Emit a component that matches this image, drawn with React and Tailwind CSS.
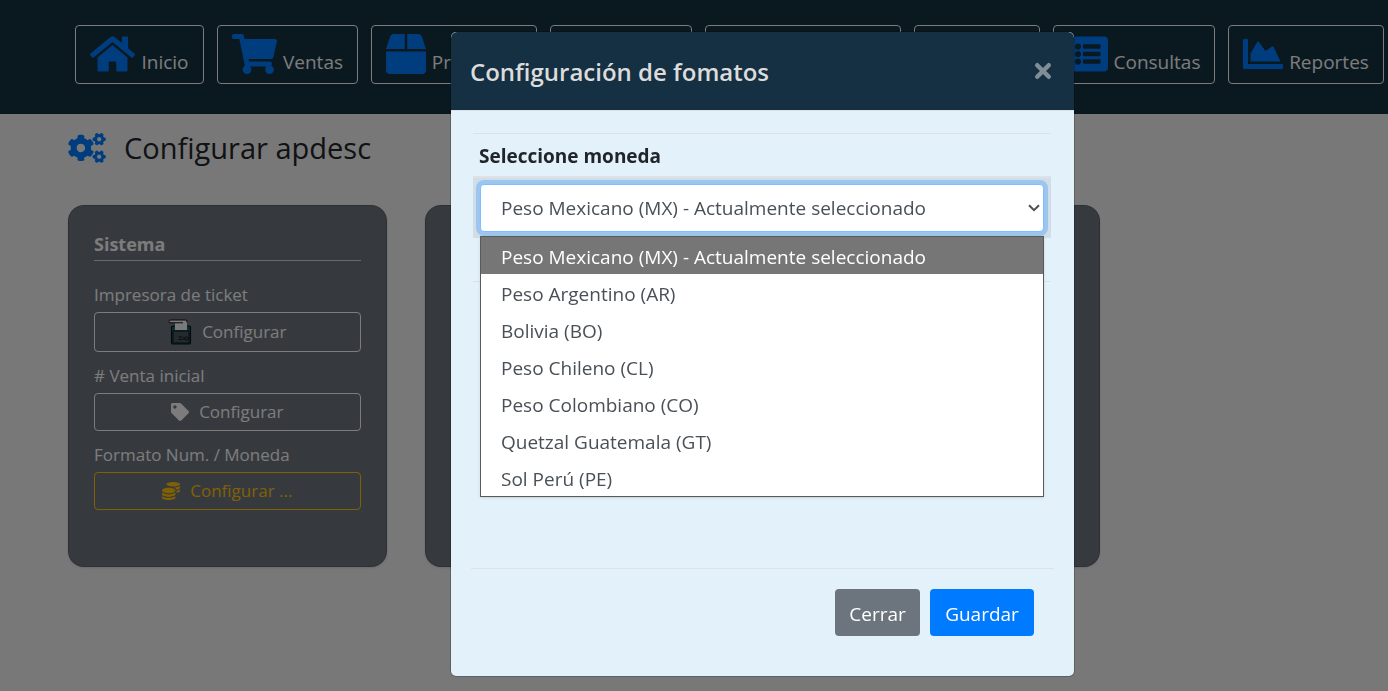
import { useState } from 'react';
import {
  FaHome,
  FaShoppingCart,
  FaBox,
  FaUsers,
  FaTruck,
  FaCashRegister,
  FaListAlt,
  FaChartArea,
  FaCogs,
  FaTag,
  FaCoins,
} from 'react-icons/fa';

const menu = [
  { label: 'Inicio', icon: FaHome, width: 'w-[129px]', iconWidth: 'w-[45px]' },
  { label: 'Ventas', icon: FaShoppingCart, width: 'w-[141px]', iconWidth: 'w-[45px]' },
  { label: 'Productos', icon: FaBox, width: 'w-[166px]', iconWidth: 'w-[40px]' },
  { title: 'Clientes', icon: FaUsers, width: 'w-[142px]', iconWidth: 'w-[50px]' },
  { title: 'Proveedores', icon: FaTruck, width: 'w-[196px]', iconWidth: 'w-[50px]' },
  { title: 'Caja', icon: FaCashRegister, width: 'w-[126px]', iconWidth: 'w-[40px]' },
  { label: 'Consultas', icon: FaListAlt, width: 'w-[162px]', iconWidth: 'w-[40px]' },
  { label: 'Reportes', icon: FaChartArea, width: 'w-[156px]', iconWidth: 'w-[40px]' },
];

const monedas = [
  { id: 'MX', nombre: 'Peso Mexicano (MX) - Actualmente seleccionado' },
  { id: 'AR', nombre: 'Peso Argentino (AR)' },
  { id: 'BO', nombre: 'Bolivia (BO)' },
  { id: 'CL', nombre: 'Peso Chileno (CL)' },
  { id: 'CO', nombre: 'Peso Colombiano (CO)' },
  { id: 'GT', nombre: 'Quetzal Guatemala (GT)' },
  { id: 'PE', nombre: 'Sol Perú (PE)' },
];

function PrinterIcon() {
  return (
    <svg width="24" height="26" viewBox="0 0 24 26" aria-hidden="true">
      <rect x="3.5" y="7" width="19" height="18" rx="1" fill="#14606c" stroke="#0b1418" strokeWidth="1.2" />
      <path d="M5 12H21V24H5Z" fill="#4a545c" stroke="#0b1418" strokeWidth="1" />
      <path d="M7 11V3.8H1.5Q0.2 1 3 1H17.5Q19.5 1 19 3.5V11Z" fill="#f4f4f4" />
      <path d="M15 3.8H1.5Q0.2 1 3 1H17.5Q19.5 1 19 3.5" fill="none" stroke="#111" strokeWidth="1" />
      <path d="M10.5 18h4M10.5 20.5h4M16 18v3" stroke="#10171b" strokeWidth="1.2" />
      <circle cx="18.5" cy="19.5" r="1.6" fill="none" stroke="#10171b" />
    </svg>
  );
}

function Navbar() {
  return (
    <header className="bg-[#143040] h-[114px] pl-[75px] pt-[25px]">
      <nav className="flex gap-[13px]">
        {menu.map(({ label, title, icon: Icon, width, iconWidth }) => (
          <a
            key={label || title}
            href="#"
            aria-label={title}
            className={`${width} h-[59px] shrink-0 flex items-end justify-center gap-1.5 pb-[7px] border border-[#f8f9fa] rounded text-[19px] leading-7 text-[#f8f9fa]`}
          >
            <Icon className={`h-[40px] ${iconWidth} mb-0.5 shrink-0 text-[#007bff]`} />
            {label}
          </a>
        ))}
      </nav>
    </header>
  );
}

function SettingsCard({ children }) {
  return (
    <section className="h-[362px] px-[25px] pt-[25px] bg-[#6c757d] border border-black/15 rounded-2xl shadow text-[#f8f9fa]">
      {children}
    </section>
  );
}

function Setting({ id, label, children, className }) {
  return (
    <div className="mb-3">
      <p id={id} className="mb-[5px] text-[17px] leading-6">{label}</p>
      <button
        type="button"
        aria-describedby={id}
        className={`w-full flex items-center justify-center gap-2.5 border rounded text-[17px] ${className}`}
      >
        {children}
      </button>
    </div>
  );
}

function FormatModal() {
  const [moneda, setMoneda] = useState('MX');

  return (
    <div className="fixed inset-0 flex justify-center items-start pt-[31px] pl-[137px] bg-black/50 overflow-hidden">
      <div
        role="dialog"
        aria-labelledby="modal-title"
        className="w-[625px] bg-[#e3f1fa] bg-clip-padding border border-black/20 rounded-md pb-10"
      >
        <div className="h-[79px] flex items-center justify-between px-[19px] pt-0.5 bg-[#143042] border-b border-[#dee2e6] rounded-t-md">
          <h5 id="modal-title" className="text-[24px] font-semibold text-[#dcdcdc]">
            Configuración de fomatos
          </h5>
          <button type="button" aria-label="Cerrar ventana" className="pb-0.5 text-[#808e98]">
            <svg width="24" height="24" viewBox="0 0 24 24" fill="none" stroke="currentColor" strokeWidth="4.4">
              <path d="M6.2 6.2l11.6 11.6M17.8 6.2L6.2 17.8" strokeLinecap="round" />
            </svg>
          </button>
        </div>

        <div className="ml-[22px] mr-[23px] mt-[22px] h-[435px]">
          <div className="h-[43px] border-t border-[#dae2e9] px-1.5 pt-2">
            <label htmlFor="moneda" className="text-[19px] leading-7 font-bold text-[#212529]">
              Seleccione moneda
            </label>
          </div>
          <div className="relative bg-[#d2dee7] border-t-2 border-[#dde2e6] px-[7px] py-1.5">
            <div className="relative">
              <select
                id="moneda"
                value={moneda}
                onChange={e => setMoneda(e.target.value)}
                className="block w-full h-[48px] pl-5 pr-8 appearance-none bg-white border border-[#80bdff] rounded ring-4 ring-[#9cc6f0] text-[19px] text-[#495057] outline-none"
              >
                {monedas.map(m => (
                  <option key={m.id} value={m.id}>{m.nombre}</option>
                ))}
              </select>
              <svg
                width="12"
                height="8"
                viewBox="0 0 12 8"
                fill="none"
                stroke="#495057"
                strokeWidth="2"
                className="absolute right-1 top-5 pointer-events-none"
              >
                <path d="M1 1.2l5 5 5-5" />
              </svg>
            </div>
            <ul
              role="listbox"
              aria-label="Monedas"
              className="absolute left-[7px] right-[7px] top-[58px] z-10 bg-white border border-[#5a5a5a] shadow-sm text-[19px] leading-[37px] text-[#495057]"
            >
              {monedas.map(m => (
                <li
                  key={m.id}
                  role="option"
                  aria-selected={m.id === moneda}
                  onClick={() => setMoneda(m.id)}
                  className={`h-[37px] pt-0.5 px-5 ${m.id === moneda ? 'bg-[#767676] text-white' : ''}`}
                >
                  {m.nombre}
                </li>
              ))}
            </ul>
          </div>
          <div className="mt-[43px] border-t border-[#dae2e9] p-[7px]">
            <div className="h-[48px] border border-[#ced4da] rounded"></div>
          </div>
        </div>

        <div className="mx-5 flex justify-end gap-2.5 pt-5 pr-5 border-t border-[#dee2e6]">
          <button type="button" className="h-[47px] w-[85px] pt-1 rounded bg-[#6c757d] text-white text-[19px]">
            Cerrar
          </button>
          <button type="button" className="h-[47px] w-[104px] pt-1 rounded bg-[#007bff] text-white text-[19px]">
            Guardar
          </button>
        </div>
      </div>
    </div>
  );
}

function App() {
  return (
    <div className="min-h-screen overflow-hidden bg-[#f1f1f1] font-['Open_Sans','Noto_Sans',sans-serif]">
      <Navbar />
      <main className="max-w-[1100px] pl-[68px] pt-3">
        <h1 className="h-[44px] flex items-center gap-[18px] text-[29px] font-medium text-[#212529]">
          <FaCogs className="h-[30px] w-[38px] text-[#007bff]" />
          Configurar apdesc
        </h1>
        <div className="mt-[35px] grid grid-cols-3 gap-[38px]">
          <SettingsCard>
            <h2 className="h-[30px] mb-[22px] border-b border-[#f8f9fa]/70 text-[18px] leading-[26px] font-bold">
              Sistema
            </h2>
            <Setting id="impresora" label="Impresora de ticket" className="h-[40px] border-[#f8f9fa]">
              <PrinterIcon />
              Configurar
            </Setting>
            <Setting id="venta" label="# Venta inicial" className="h-[38px] border-[#f8f9fa]">
              <FaTag className="size-[18px]" />
              Configurar
            </Setting>
            <Setting id="formato" label="Formato Num. / Moneda" className="h-[38px] border-[#ffc107] text-[#ffc107]">
              <FaCoins className="size-[18px]" />
              Configurar ...
            </Setting>
          </SettingsCard>
          <SettingsCard />
          <SettingsCard />
        </div>
      </main>
      <FormatModal />
    </div>
  );
}

export default App;
